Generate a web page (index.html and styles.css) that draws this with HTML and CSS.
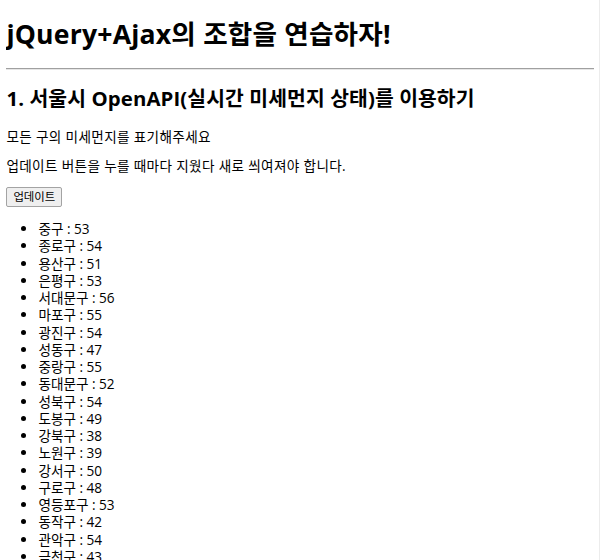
FILE: index.html
```html
<!DOCTYPE html>
<html lang="ko">
<head>
<meta charset="utf-8">
<title>jQuery+Ajax의 조합을 연습하자!</title>
<link rel="stylesheet" href="styles.css">
</head>
<body>
<h1 class="title">jQuery+Ajax의 조합을 연습하자!</h1>
<hr class="rule">
<div class="section">
  <h2 class="subtitle">1. 서울시 OpenAPI(실시간 미세먼지 상태)를 이용하기</h2>
  <p class="desc">모든 구의 미세먼지를 표기해주세요</p>
  <p class="desc">업데이트 버튼을 누를 때마다 지웠다 새로 씌여져야 합니다.</p>
  <button class="btn" type="button">업데이트</button>
  <ul class="list">
    <li>중구 : 53</li>
    <li>종로구 : 54</li>
    <li>용산구 : 51</li>
    <li>은평구 : 53</li>
    <li>서대문구 : 56</li>
    <li>마포구 : 55</li>
    <li>광진구 : 54</li>
    <li>성동구 : 47</li>
    <li>중랑구 : 55</li>
    <li>동대문구 : 52</li>
    <li>성북구 : 54</li>
    <li>도봉구 : 49</li>
    <li>강북구 : 38</li>
    <li>노원구 : 39</li>
    <li>강서구 : 50</li>
    <li>구로구 : 48</li>
    <li>영등포구 : 53</li>
    <li>동작구 : 42</li>
    <li>관악구 : 54</li>
    <li>금천구 : 43</li>
  </ul>
</div>
</body>
</html>
```
FILE: styles.css
```css
html {
  background: #fff;
  box-shadow: inset -1px 0 0 #ececec;
}
body {
  margin: 6.4px;
  font-family: "Open Sans", "Noto Sans CJK KR", sans-serif;
  font-size: 13.6px;
  line-height: 17px;
  color: #000;
}
.title {
  font-size: 26.6px;
  line-height: 34px;
  height: 34px;
  font-weight: 700;
  letter-spacing: 0.2px;
  margin: 11px 0 17px;
}
.rule {
  margin: 6.4px 0;
  border: 0;
  border-top: 1px solid #a0a0a0;
  border-bottom: 1px solid #e6e6e6;
  height: 0;
}
.subtitle {
  font-size: 20.4px;
  line-height: 25.5px;
  height: 25.5px;
  font-weight: 700;
  letter-spacing: 0.1px;
  margin: 15.9px 0;
}
.desc {
  height: 17px;
  margin: 12.8px 0;
  letter-spacing: 0.35px;
}
.btn {
  font-family: "Open Sans", "Noto Sans CJK KR", sans-serif;
  font-size: 11.4px;
  line-height: 14px;
  padding: 1px 6px;
  background: #efefef;
  border: 1px solid #a3a3a3;
  border-radius: 2px;
  color: #000;
  margin: 0;
  height: 20px;
  vertical-align: top;
}
.list {
  margin: 12.8px 0;
  padding-left: 32px;
  list-style: disc;
}
.list li {
  line-height: 17.25px;
  height: 17.25px;
}
```
